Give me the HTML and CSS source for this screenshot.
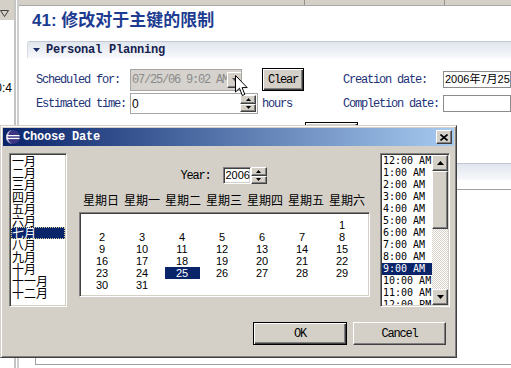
FILE: index.html
```html
<!DOCTYPE html>
<html lang="zh-CN">
<head>
  <meta charset="UTF-8">
  <meta name="viewport" content="width=device-width, initial-scale=1.0">
  <title>Choose Date</title>
  <link rel="stylesheet" href="styles.css">
</head>
<body>
  <div class="workbench">
    <!-- Left view (clipped) -->
    <div class="side">
      <div class="side-top">
        <svg width="9" height="7" viewBox="0 0 9 7"><path d="M0.5 0.5 H8.5 L4.5 6.5 Z" fill="none" stroke="#404040"/></svg>
      </div>
      <div class="side-text">0:4</div>
    </div>
    <div class="sash"></div>

    <!-- Task editor -->
    <div class="editor">
      <div class="editor-top">
        <span class="tab-part first"></span>
        <span class="tab-part second"></span>
      </div>

      <h1 class="title">41: 修改对于主键的限制</h1>

      <div class="section-head">
        <svg class="twisty" width="7" height="4" viewBox="0 0 7 4"><path d="M0 0 H7 L3.5 4 Z" fill="#1a2a66"/></svg>
        Personal Planning
      </div>

      <div class="form-grid">
        <label class="form-label">Scheduled for:</label>
        <div class="combo">
          <span class="combo-text">07/25/06 9:02 AM</span>
          <span class="combo-btn raised">
            <svg width="7" height="4" viewBox="0 0 7 4"><path d="M0 0 H7 L3.5 4 Z" fill="#505050"/></svg>
          </span>
        </div>
        <div><button class="btn default clear-btn">Clear</button></div>
        <label class="form-label">Creation date:</label>
        <div class="field date-field">2006年7月25日</div>

        <label class="form-label">Estimated time:</label>
        <div class="spin-field">
          <span class="spin-value">0</span>
          <span class="spin">
            <span class="spin-half raised"><svg width="5" height="3" viewBox="0 0 5 3"><path d="M0 3 H5 L2.5 0 Z" fill="#000"/></svg></span>
            <span class="spin-half raised"><svg width="5" height="3" viewBox="0 0 5 3"><path d="M0 0 H5 L2.5 3 Z" fill="#000"/></svg></span>
          </span>
        </div>
        <span class="form-label">hours</span>
        <label class="form-label">Completion date:</label>
        <div class="field date-field"></div>
      </div>

      <div class="row3">
        <div class="field row3-field"></div>
        <button class="btn default row3-btn"></button>
      </div>

      <div class="section-head second"></div>
      <div class="text-box"></div>
    </div>
  </div>

  <!-- Choose Date dialog -->
  <div class="dialog">
    <div class="dialog-title">
      <svg class="app-icon" width="16" height="16" viewBox="0 0 16 16">
        <circle cx="8" cy="8" r="7" fill="#3b3483"/>
        <path d="M8 1 A7 7 0 0 0 8 15 A5 7 0 0 1 8 1 Z" fill="#c9c6e0"/>
        <rect x="1.5" y="6" width="13" height="1.3" fill="#fff"/>
        <rect x="1.5" y="8.8" width="13" height="1.3" fill="#fff"/>
      </svg>
      <span class="dialog-caption">Choose Date</span>
      <span class="close-btn raised">
        <svg width="8" height="7" viewBox="0 0 8 7"><path d="M0.5 0.5 L7.5 6.5 M7.5 0.5 L0.5 6.5" stroke="#000" stroke-width="1.6"/></svg>
      </span>
    </div>

    <div class="dialog-body">
      <div class="chooser">
        <!-- Months -->
        <div class="months sunken">
          <div class="month">一月</div>
          <div class="month">二月</div>
          <div class="month">三月</div>
          <div class="month">四月</div>
          <div class="month">五月</div>
          <div class="month">六月</div>
          <div class="month selected">七月</div>
          <div class="month">八月</div>
          <div class="month">九月</div>
          <div class="month">十月</div>
          <div class="month">十一月</div>
          <div class="month">十二月</div>
        </div>

        <!-- Year and days -->
        <div class="middle">
          <div class="year-row">
            <span class="year-label">Year:</span>
            <span class="year-input sunken">2006</span>
            <span class="year-spin">
              <span class="spin-half raised"><svg width="5" height="3" viewBox="0 0 5 3"><path d="M0 3 H5 L2.5 0 Z" fill="#000"/></svg></span>
              <span class="spin-half raised"><svg width="5" height="3" viewBox="0 0 5 3"><path d="M0 0 H5 L2.5 3 Z" fill="#000"/></svg></span>
            </span>
          </div>

          <div class="weekdays">
            <span>星期日</span><span>星期一</span><span>星期二</span><span>星期三</span><span>星期四</span><span>星期五</span><span>星期六</span>
          </div>

          <div class="calendar sunken">
            <span></span><span></span><span></span><span></span><span></span><span></span><span>1</span>
            <span>2</span><span>3</span><span>4</span><span>5</span><span>6</span><span>7</span><span>8</span>
            <span>9</span><span>10</span><span>11</span><span>12</span><span>13</span><span>14</span><span>15</span>
            <span>16</span><span>17</span><span>18</span><span>19</span><span>20</span><span>21</span><span>22</span>
            <span>23</span><span>24</span><span><b class="day-selected">25</b></span><span>26</span><span>27</span><span>28</span><span>29</span>
            <span>30</span><span>31</span>
          </div>
        </div>

        <!-- Times -->
        <div class="times sunken">
          <div class="time-items">
            <div class="time">12:00 AM</div>
            <div class="time">1:00 AM</div>
            <div class="time">2:00 AM</div>
            <div class="time">3:00 AM</div>
            <div class="time">4:00 AM</div>
            <div class="time">5:00 AM</div>
            <div class="time">6:00 AM</div>
            <div class="time">7:00 AM</div>
            <div class="time">8:00 AM</div>
            <div class="time selected">9:00 AM</div>
            <div class="time">10:00 AM</div>
            <div class="time">11:00 AM</div>
            <div class="time">12:00 PM</div>
          </div>
          <div class="scrollbar">
            <span class="sb-btn raised"><svg width="7" height="4" viewBox="0 0 7 4"><path d="M0 4 H7 L3.5 0 Z" fill="#000"/></svg></span>
            <span class="sb-thumb raised"></span>
            <span class="sb-track"></span>
            <span class="sb-btn raised"><svg width="7" height="4" viewBox="0 0 7 4"><path d="M0 0 H7 L3.5 4 Z" fill="#000"/></svg></span>
          </div>
        </div>
      </div>

      <div class="dialog-foot">
        <button class="btn default ok-btn">OK</button>
        <button class="btn cancel-btn">Cancel</button>
      </div>
    </div>
  </div>

  <!-- Mouse pointer -->
  <svg class="cursor" width="13" height="22" viewBox="0 0 13 22">
    <path d="M0.5 0.5 V17 L4.5 13.2 L7.3 20.5 L9.8 19.4 L7.1 12.6 L12.2 12.6 Z" fill="#fff" stroke="#000"/>
  </svg>
</body>
</html>
```

FILE: styles.css
```css
* {
  box-sizing: border-box;
}

body {
  margin: 0;
  width: 511px;
  height: 368px;
  overflow: hidden;
  position: relative;
  background: #fff;
  font-family: "Liberation Mono", monospace;
  font-size: 12px;
}

/* Classic 3D borders */
.raised {
  background: #d4d0c8;
  border: 1px solid;
  border-color: #fff #404040 #404040 #fff;
  box-shadow: inset -1px -1px #808080;
}

.sunken {
  background: #fff;
  border: 1px solid;
  border-color: #808080 #fff #fff #808080;
  box-shadow: inset 1px 1px #404040, inset -1px -1px #d4d0c8;
  padding: 1px;
}

.btn {
  font-family: "Liberation Mono", monospace;
  font-size: 12px;
  letter-spacing: -1.2px;
  color: #000;
  padding: 0;
  background: #d4d0c8;
  border: 1px solid;
  border-color: #fff #404040 #404040 #fff;
  box-shadow: inset -1px -1px #808080;
}

.btn.default {
  border: 1px solid #000;
  box-shadow: inset 1px 1px #fff, inset -1px -1px #404040, inset -2px -2px #808080;
}

/* Workbench behind the dialog */
.workbench {
  display: flex;
  height: 368px;
}

.side {
  width: 14px;
  flex: none;
}

.side-top {
  height: 20px;
  background: #d4d0c8;
  padding: 10px 0 0 0;
}

.side-top svg {
  display: block;
}

.side-text {
  margin-top: 61px;
  font: 12px/14px "Liberation Sans", sans-serif;
  color: #000;
  white-space: nowrap;
  direction: rtl;
  overflow: hidden;
  padding-right: 2px;
}

.sash {
  width: 5px;
  flex: none;
  border-left: 2px solid #c4c4c4;
  border-right: 2px solid #cdcdcd;
}

.editor {
  flex: 1;
  min-width: 0;
  overflow: hidden;
}

.editor-top {
  height: 6px;
  background: #d4d0c8;
  border-bottom: 1px solid #a8a8a8;
  display: flex;
}

.tab-part {
  height: 5px;
  border-right: 1px solid #909090;
}

.tab-part.first {
  width: 286px;
}

.tab-part.second {
  width: 140px;
}

.title {
  margin: 5px 0 0 13px;
  font: bold 17px/20px "Liberation Sans", "Noto Sans CJK SC", sans-serif;
  color: #1d3c91;
  white-space: nowrap;
}

.section-head {
  margin: 10px 0 0 8px;
  height: 17px;
  border-top: 1px solid #c1c7d2;
  border-left: 1px solid #d6dbe4;
  border-top-left-radius: 3px;
  background: linear-gradient(#e1e6ee, #f7f8fb);
  display: flex;
  align-items: center;
  padding-left: 5px;
  font-weight: bold;
  letter-spacing: -0.2px;
  color: #14214f;
  white-space: nowrap;
}

.twisty {
  margin-right: 6px;
}

.section-head.second {
  margin-top: 16px;
}

.form-grid {
  margin: 10px 0 0 17px;
  display: grid;
  grid-template-columns: 94px 132px 81px 100px 1fr;
  grid-template-rows: 23px 21px;
  row-gap: 2px;
  align-items: center;
}

.form-label {
  color: #1e3278;
  letter-spacing: -1.2px;
  white-space: nowrap;
}

.combo {
  width: 112px;
  height: 22px;
  border: 1px solid #a5a5a5;
  background: #d6d3ce;
  display: flex;
  align-items: center;
  padding-left: 1px;
  overflow: hidden;
}

.combo-text {
  color: #8a8a8a;
  letter-spacing: -1.2px;
  white-space: nowrap;
  flex: none;
  width: 95px;
}

.combo-btn {
  width: 16px;
  height: 16px;
  flex: none;
  display: flex;
  align-items: center;
  justify-content: center;
  margin-left: auto;
}

.clear-btn {
  width: 42px;
  height: 23px;
  display: block;
}

.field {
  border: 1px solid #8c8c8c;
  background: #fff;
}

.date-field {
  height: 17px;
  font: 11px/15px "Liberation Sans", "Noto Sans CJK SC", sans-serif;
  color: #000;
  padding-left: 1px;
  white-space: nowrap;
  overflow: hidden;
}

.spin-field {
  width: 128px;
  height: 21px;
  border: 1px solid #a5a5a5;
  display: flex;
  align-items: center;
}

.spin-value {
  font: 12px "Liberation Sans", sans-serif;
  padding-left: 1px;
}

.spin {
  margin-left: auto;
  margin-right: 1px;
  width: 16px;
  height: 17px;
  display: flex;
  flex-direction: column;
}

.spin-half {
  flex: 1;
  display: flex;
  align-items: center;
  justify-content: center;
}

.row3 {
  margin: 8px 0 0 109px;
  display: flex;
  align-items: flex-start;
}

.row3-field {
  width: 174px;
  height: 22px;
  margin-top: 3px;
  border-color: #a5a5a5;
}

.row3-btn {
  margin-left: 3px;
  width: 53px;
  height: 23px;
}

.text-box {
  margin: 9px 0 0 16px;
  height: 176px;
  border: 1px solid #a0a0a0;
  border-right: none;
}

/* Dialog */
.dialog {
  position: absolute;
  left: 0;
  top: 125px;
  width: 457px;
  height: 233px;
  background: #d4d0c8;
  border: 1px solid;
  border-color: #d4d0c8 #404040 #404040 #d4d0c8;
  box-shadow: inset 1px 1px #fff, inset -1px -1px #808080;
  padding: 2px;
  display: flex;
  flex-direction: column;
}

.dialog-title {
  height: 18px;
  flex: none;
  background: linear-gradient(to right, #0a246a, #a6caf0);
  display: flex;
  align-items: center;
  padding-left: 2px;
}

.app-icon {
  margin-right: 2px;
}

.dialog-caption {
  color: #fff;
  font-weight: bold;
  letter-spacing: -0.2px;
}

.close-btn {
  margin-left: auto;
  margin-right: 2px;
  width: 16px;
  height: 14px;
  display: flex;
  align-items: center;
  justify-content: center;
}

.dialog-body {
  flex: 1;
  padding: 7px 8px 10px 6px;
  display: flex;
  flex-direction: column;
}

.chooser {
  display: flex;
  height: 154px;
}

.months {
  width: 58px;
  height: 154px;
  flex: none;
}

.month {
  font: 12px/12px "Noto Sans CJK SC", sans-serif;
  padding-left: 1px;
  color: #000;
  white-space: nowrap;
}

.month.selected {
  background: #0a246a;
  color: #fff;
  outline: 1px dotted #d8d49c;
  outline-offset: -1px;
}

.middle {
  width: 313px;
  flex: none;
  padding-top: 14px;
}

.year-row {
  height: 17px;
  display: flex;
  align-items: center;
  justify-content: center;
}

.year-label {
  letter-spacing: -1.2px;
  margin-right: 12px;
}

.year-input {
  width: 28px;
  height: 17px;
  font: 11px/13px "Liberation Sans", sans-serif;
  padding: 1px 0 0 2px;
}

.year-spin {
  width: 16px;
  height: 17px;
  display: flex;
  flex-direction: column;
}

.weekdays {
  margin-top: 8px;
  height: 16px;
  padding-left: 16px;
  display: flex;
  gap: 5px;
  font: 12px/16px "Noto Sans CJK SC", sans-serif;
  color: #000;
}

.weekdays span {
  width: 36px;
  flex: none;
  white-space: nowrap;
}

.calendar {
  margin: 4px 0 0 12px;
  width: 291px;
  height: 85px;
  padding: 6px 0 0 2px;
  display: grid;
  grid-template-columns: repeat(7, 40px);
  grid-auto-rows: 12px;
  align-content: start;
  font: 11px/12px "Liberation Sans", sans-serif;
  color: #000;
  text-align: center;
}

.day-selected {
  display: block;
  width: 35px;
  margin: 0 auto;
  font-weight: normal;
  background: #0a246a;
  color: #fff;
}

.times {
  width: 70px;
  height: 154px;
  flex: none;
  display: flex;
}

.time-items {
  flex: 1;
  overflow: hidden;
}

.time {
  font: 10px/12px "DejaVu Sans Mono", monospace;
  padding-left: 1px;
  color: #000;
  white-space: nowrap;
}

.time.selected {
  background: #0a246a;
  color: #fff;
}

.scrollbar {
  width: 16px;
  flex: none;
  display: flex;
  flex-direction: column;
}

.sb-btn {
  height: 16px;
  flex: none;
  display: flex;
  align-items: center;
  justify-content: center;
}

.sb-thumb {
  height: 58px;
  flex: none;
}

.sb-track {
  flex: 1;
  background: repeating-conic-gradient(#d4d0c8 0 25%, #fff 0 50%) 0 0 / 2px 2px;
}

.dialog-foot {
  margin-top: auto;
  display: flex;
  justify-content: flex-end;
  gap: 6px;
}

.ok-btn {
  width: 94px;
  height: 23px;
}

.cancel-btn {
  width: 93px;
  height: 23px;
}

.cursor {
  position: absolute;
  left: 235px;
  top: 75px;
}
```
